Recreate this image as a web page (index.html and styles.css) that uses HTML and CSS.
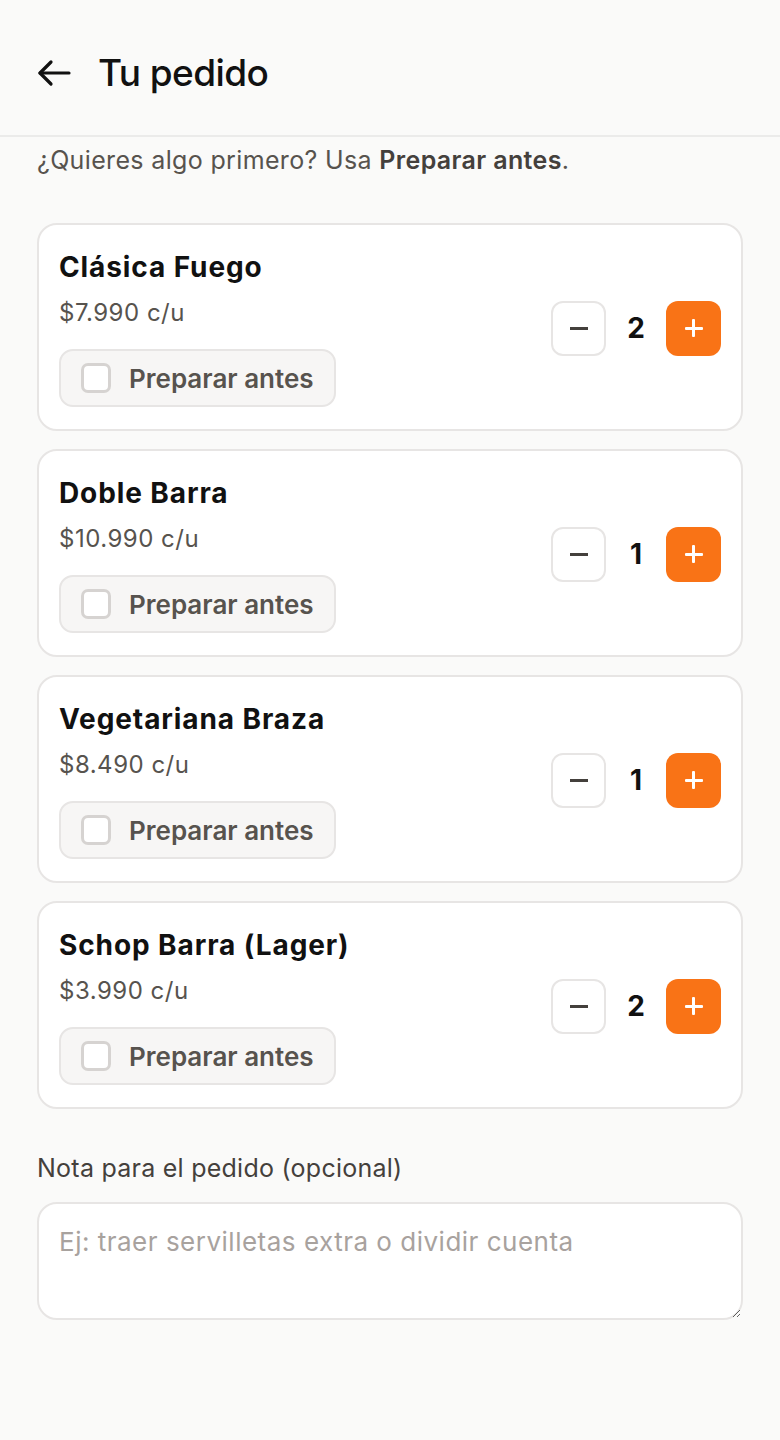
FILE: index.html
```html
<!DOCTYPE html>
<html lang="es">
    <head>
        <meta charset="utf-8">
        <title>Tu pedido</title>
        <link rel="stylesheet" href="styles.css">
    </head>
    <body>
        <div class="header">
            <button class="back-button" aria-label="Volver">
                <svg width="34" height="28" viewBox="0 0 34 28" fill="none" stroke="#111111" stroke-width="3.2" stroke-linecap="round" stroke-linejoin="round">
                    <path d="M32 14H3"/>
                    <path d="M14 3L3 14L14 25"/>
                </svg>
            </button>
            <h1 class="title">Tu pedido</h1>
        </div>

        <div class="content">
            <p class="intro">¿Quieres algo primero? Usa <strong>Preparar antes</strong>.</p>

            <div class="item-list">
                <div class="item-card">
                    <div class="item-info">
                        <div class="item-name">Clásica Fuego</div>
                        <div class="item-price">$7.990 c/u</div>
                        <label class="prep-toggle">
                            <span class="prep-box"></span>
                            <span>Preparar antes</span>
                        </label>
                    </div>
                    <div class="stepper">
                        <button class="minus-button" aria-label="Quitar"><span class="minus-sign"></span></button>
                        <span class="qty">2</span>
                        <button class="plus-button" aria-label="Agregar"><span class="plus-sign"></span></button>
                    </div>
                </div>

                <div class="item-card">
                    <div class="item-info">
                        <div class="item-name">Doble Barra</div>
                        <div class="item-price">$10.990 c/u</div>
                        <label class="prep-toggle">
                            <span class="prep-box"></span>
                            <span>Preparar antes</span>
                        </label>
                    </div>
                    <div class="stepper">
                        <button class="minus-button" aria-label="Quitar"><span class="minus-sign"></span></button>
                        <span class="qty">1</span>
                        <button class="plus-button" aria-label="Agregar"><span class="plus-sign"></span></button>
                    </div>
                </div>

                <div class="item-card">
                    <div class="item-info">
                        <div class="item-name">Vegetariana Braza</div>
                        <div class="item-price">$8.490 c/u</div>
                        <label class="prep-toggle">
                            <span class="prep-box"></span>
                            <span>Preparar antes</span>
                        </label>
                    </div>
                    <div class="stepper">
                        <button class="minus-button" aria-label="Quitar"><span class="minus-sign"></span></button>
                        <span class="qty">1</span>
                        <button class="plus-button" aria-label="Agregar"><span class="plus-sign"></span></button>
                    </div>
                </div>

                <div class="item-card">
                    <div class="item-info">
                        <div class="item-name">Schop Barra (Lager)</div>
                        <div class="item-price">$3.990 c/u</div>
                        <label class="prep-toggle">
                            <span class="prep-box"></span>
                            <span>Preparar antes</span>
                        </label>
                    </div>
                    <div class="stepper">
                        <button class="minus-button" aria-label="Quitar"><span class="minus-sign"></span></button>
                        <span class="qty">2</span>
                        <button class="plus-button" aria-label="Agregar"><span class="plus-sign"></span></button>
                    </div>
                </div>
            </div>

            <label class="note-label" for="note">Nota para el pedido (opcional)</label>
            <textarea id="note" class="note-input" placeholder="Ej: traer servilletas extra o dividir cuenta"></textarea>
        </div>
    </body>
</html>
```

FILE: styles.css
```css
body {
    margin: 0;
    background-color: #fafaf9;
    font-family: Inter, "Noto Sans", sans-serif;
    color: #111111;
}
.header {
    display: flex;
    align-items: center;
    gap: 27px;
    height: 137px;
    padding: 10px 37px 0 37px;
    box-sizing: border-box;
    border-bottom: 2px solid #ebebea;
}
.back-button {
    display: flex;
    align-items: center;
    padding: 0;
    margin: 0;
    border: none;
    background: none;
    cursor: pointer;
}
.title {
    margin: 0;
    font-size: 37px;
    font-weight: 500;
    letter-spacing: -0.6px;
}
.content {
    padding: 0 37px 60px 37px;
}
.intro {
    margin: 6px 0 46px 0;
    font-size: 25px;
    line-height: 34px;
    letter-spacing: 0.35px;
    color: #57534e;
}
.intro strong {
    font-weight: 600;
    color: #44403c;
}
.item-list {
    display: flex;
    flex-direction: column;
    gap: 18px;
}
.item-card {
    display: flex;
    align-items: center;
    justify-content: space-between;
    padding: 24px 20px 22px 20px;
    background-color: #ffffff;
    border: 2px solid #e7e5e4;
    border-radius: 20px;
}
.item-info {
    display: flex;
    flex-direction: column;
    align-items: flex-start;
}
.item-name {
    font-size: 28px;
    line-height: 36px;
    font-weight: 700;
    letter-spacing: 0.9px;
    color: #111111;
}
.item-price {
    margin-top: 12px;
    font-size: 24px;
    line-height: 32px;
    letter-spacing: 0.5px;
    color: #57534e;
}
.prep-toggle {
    display: flex;
    align-items: center;
    gap: 18px;
    margin-top: 20px;
    height: 58px;
    padding: 0 20px 0 20px;
    box-sizing: border-box;
    background-color: #f7f6f5;
    border: 2px solid #e7e5e4;
    border-radius: 14px;
    font-size: 26px;
    font-weight: 600;
    color: #57534e;
    cursor: pointer;
}
.prep-box {
    width: 30px;
    height: 30px;
    box-sizing: border-box;
    border: 3px solid #d6d3d1;
    border-radius: 7px;
    background-color: #ffffff;
}
.stepper {
    display: flex;
    align-items: center;
    gap: 15px;
}
.minus-button,
.plus-button {
    display: flex;
    align-items: center;
    justify-content: center;
    width: 55px;
    height: 55px;
    padding: 0;
    border-radius: 12px;
    cursor: pointer;
}
.minus-button {
    background-color: #ffffff;
    border: 2px solid #e7e5e4;
}
.plus-button {
    background-color: #f97316;
    border: none;
}
.minus-sign {
    width: 18px;
    height: 3px;
    background-color: #44403c;
}
.plus-sign {
    position: relative;
    width: 18px;
    height: 18px;
}
.plus-sign::before,
.plus-sign::after {
    content: "";
    position: absolute;
    background-color: #ffffff;
    border-radius: 1px;
}
.plus-sign::before {
    left: 0;
    top: 7.5px;
    width: 18px;
    height: 3px;
}
.plus-sign::after {
    left: 7.5px;
    top: 0;
    width: 3px;
    height: 18px;
}
.qty {
    width: 30px;
    text-align: center;
    font-size: 28px;
    font-weight: 700;
    color: #111111;
}
.note-label {
    display: block;
    margin-top: 43px;
    font-size: 25px;
    line-height: 32px;
    letter-spacing: 0.25px;
    color: #44403c;
}
.note-input {
    display: block;
    width: 100%;
    height: 118px;
    margin-top: 18px;
    padding: 22px 20px;
    box-sizing: border-box;
    border: 2px solid #e7e5e4;
    border-radius: 20px;
    background-color: #ffffff;
    font-family: Inter, "Noto Sans", sans-serif;
    font-size: 26px;
    line-height: 32px;
    letter-spacing: 0.5px;
    color: #111111;
}
.note-input::placeholder {
    color: #a8a29e;
}
```
